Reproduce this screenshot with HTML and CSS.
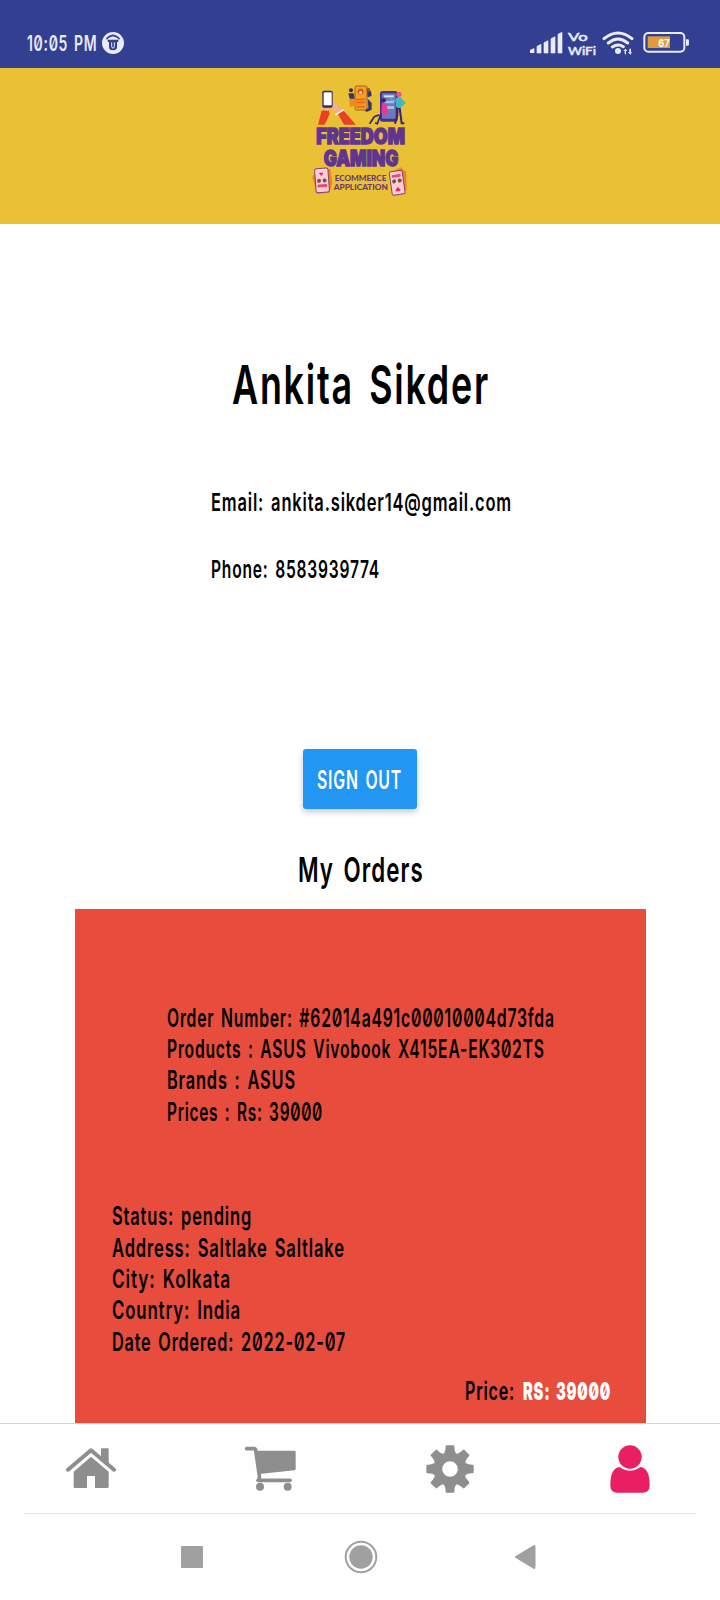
FILE: index.html
```html
<!DOCTYPE html>
<html lang="en">
<head>
<meta charset="utf-8">
<title>Freedom Gaming</title>
<link rel="stylesheet" href="styles.css">
</head>
<body>
<div class="screen">
  <div class="status-bar">
    <span class="clock"><span class="t t-clock">10:05 PM</span></span>
    <svg class="badge" width="22" height="22" viewBox="0 0 66 66"><circle cx="33" cy="33" r="33" fill="#e9ebfa"/><path d="M14 22Q16 14 33 10Q50 14 52 22" fill="none" stroke="#333f91" stroke-width="5"/><path d="M17 23H49V30H45V45Q45 55 33 55T21 45V30H17z" fill="#333f91"/><path d="M29 31V44Q29 48 33 48T37 44V31" fill="none" stroke="#e9ebfa" stroke-width="3"/></svg>
    <svg class="indicators" width="162" height="30" viewBox="0 0 486 90">
      <g fill="#e9ebfa"><path d="M3 66l13-6v15H3z"/><path d="M24 55l12-6v26H24zM45 44l12-6v37H45zM66 32l12-6v49H66zM87 19l12-6v62H87z" stroke="#e9ebfa" stroke-width="2" stroke-linejoin="round"/>
      <text x="117" y="38" class="vo" textLength="59" lengthAdjust="spacingAndGlyphs">Vo</text>
      <text x="117" y="80" class="vo" textLength="84" lengthAdjust="spacingAndGlyphs">WiFi</text>
      <circle cx="267" cy="69" r="9"/><path d="M289 62l6 7h-4v10h-4V69h-4zM301 62v11h-4l7 7 5-7h-3V62z"/></g>
      <path d="M225 32Q267-2 309 32M238 45Q267 21 296 45M250 57Q267 45 283 56" fill="none" stroke="#e9ebfa" stroke-width="9" stroke-linecap="round"/>
      <rect x="346" y="15" width="120" height="56" rx="12" fill="none" stroke="#e9ebfa" stroke-width="6"/>
      <rect x="356" y="25" width="67" height="35" fill="#e09a38"/><path d="M471 34h5q4 0 4 4v11q0 4-4 4h-5z" fill="#e9ebfa"/>
      <text x="388" y="58" class="pct" textLength="34" lengthAdjust="spacingAndGlyphs">67</text>
    </svg>
  </div>

  <header class="brand">
    <svg width="120" height="140" viewBox="0 0 360 420">
      <path d="M65 122L85 119 89 132 74 164H54z" fill="#e84125"/><path d="M111 127L129 120 168 164H132z" fill="#e84125"/>
      <path d="M64 118L67 93 90 88 101 96 127 118 112 132 90 111 84 124z" fill="#f3b08a"/>
      <path d="M106 135L132 119" stroke="#fff" stroke-width="4"/>
      <rect x="67" y="62" width="31" height="51" rx="5" fill="#33295f"/><rect x="71" y="67" width="24" height="39" fill="#fff"/>
      <rect x="165" y="48" width="36" height="72" rx="4" fill="#f4a41c" stroke="#a5612b" stroke-width="3"/>
      <circle cx="182" cy="65" r="9" fill="#d4532a"/><circle cx="182" cy="68" r="5" fill="#f7d3a8"/>
      <path d="M148 88l11-7 7 11 31-10v20l-48 9z" fill="#f28b18"/><path d="M168 88h25M168 97h25M170 111h25" stroke="#e5631f" stroke-width="4"/>
      <circle cx="153" cy="61" r="6" fill="#34265f"/><path d="M145 70h16l3 16h-15zM201 61l12 2 2 15-12 4zM203 86l12 13v20l-13 6-9-2 12-10z" fill="#34366e"/><circle cx="205" cy="60" r="6" fill="#a3511f"/>
      <rect x="240" y="63" width="53" height="92" rx="8" fill="#463091"/><rect x="246" y="70" width="41" height="76" rx="3" fill="#6c79bd"/>
      <rect x="252" y="76" width="29" height="6" fill="#d5e3f4"/><path d="M251 92h31v8h-31zM262 108h20v9h-20z" fill="#a8bce1"/>
      <circle cx="251" cy="91" r="7" fill="#392477"/><path d="M246 98l12 2 5 21-6 18-13-12z" fill="#ed3598"/><path d="M242 134l-10 27-7-2M238 134l-15 6-14 21" fill="none" stroke="#392477" stroke-width="5"/>
      <circle cx="297" cy="73" r="8" fill="#e95c7e"/><path d="M288 84l13-3 9 13-7 20-15-3z" fill="#41b6c6"/><path d="M306 90l8 8-8 9M289 93l-19-6" fill="none" stroke="#41b6c6" stroke-width="5"/>
      <path d="M293 113l-1 24-7 24M299 114l6 46h8" fill="none" stroke="#392477" stroke-width="6"/>
      <g class="wordmark"><text x="49" y="221" textLength="266" lengthAdjust="spacingAndGlyphs">FREEDOM</text><text x="71" y="289" textLength="224" lengthAdjust="spacingAndGlyphs">GAMING</text></g>
      <g class="tagline"><text x="104" y="333" textLength="155" lengthAdjust="spacingAndGlyphs">ECOMMERCE</text><text x="101" y="361" textLength="163" lengthAdjust="spacingAndGlyphs">APPLICATION</text></g>
      <path d="M37 320l12-16 42-8 6 42-9 30-36 4-8-26z" fill="#f08022"/>
      <g transform="rotate(-4 66 331)"><rect x="46" y="295" width="40" height="72" rx="5" fill="#f8cfd3" stroke="#81456e" stroke-width="3"/><path d="M65 318l-6-7q1-6 6-2 5-4 6 2z" fill="#e82c68"/><circle cx="57" cy="332" r="6" fill="#775240"/><circle cx="74" cy="332" r="6" fill="#775240"/><rect x="51" y="343" width="30" height="9" rx="4" fill="#ee477a"/></g>
      <path d="M270 308l33-16 16 15 1 52-14 16-24-5z" fill="#f08022"/>
      <g transform="rotate(-8 291 338)"><rect x="272" y="303" width="39" height="71" rx="5" fill="#f8cfd3" stroke="#81456e" stroke-width="3"/><rect x="278" y="313" width="27" height="9" rx="3" fill="#ee477a"/><circle cx="283" cy="333" r="6" fill="#775240"/><circle cx="300" cy="333" r="6" fill="#775240"/><path d="M291 351l8 9q-2 7-8 3-6 4-8-3z" fill="#e82c68"/></g>
    </svg>
  </header>

  <main class="content">
    <h1 class="name"><span class="t t-name">Ankita Sikder</span></h1>
    <div class="contact">
      <p><span class="t t-email">Email: ankita.sikder14@gmail.com</span></p>
      <p><span class="t t-phone">Phone: 8583939774</span></p>
    </div>
    <button class="sign-out"><span class="t t-button">SIGN OUT</span></button>
    <h2 class="orders-title"><span class="t t-title">My Orders</span></h2>
    <section class="order">
      <div class="items">
        <p><span class="t t-number">Order Number: #62014a491c00010004d73fda</span></p>
        <p><span class="t t-products">Products : ASUS Vivobook X415EA-EK302TS</span></p>
        <p><span class="t t-brands">Brands : ASUS</span></p>
        <p><span class="t t-prices">Prices : Rs: 39000</span></p>
      </div>
      <div class="shipping">
        <p><span class="t t-status">Status: pending</span></p>
        <p><span class="t t-address">Address: Saltlake Saltlake</span></p>
        <p><span class="t t-city">City: Kolkata</span></p>
        <p><span class="t t-country">Country: India</span></p>
        <p><span class="t t-date">Date Ordered: 2022-02-07</span></p>
      </div>
      <p class="total"><span class="total-label"><span class="t t-price">Price:</span></span><strong class="total-value"><span class="t t-amount">RS: 39000</span></strong></p>
    </section>
  </main>

  <nav class="tabs">
    <a class="tab tab-home"><svg width="50" height="41" viewBox="0 0 150 123"><path d="M6 65L75 7l69 58" fill="none" stroke="#8e8e8e" stroke-width="12" stroke-linecap="round" stroke-linejoin="round"/><path d="M105 3q0-2 2-2h19q2 0 2 2v47l-23-19z" fill="#8e8e8e"/><path d="M75 26l53 45v45q0 4-4 4H87V84H63v36H27q-4 0-4-4V71z" fill="#8e8e8e"/></svg></a>
    <a class="tab"><svg width="52" height="45" viewBox="0 0 156 135"><path d="M8 8h22q4 0 5 4l11 77v10" fill="none" stroke="#8e8e8e" stroke-width="11" stroke-linecap="round"/><path d="M36 14h115q4 0 4 4v51q0 4-4 4L46 84z" fill="#8e8e8e"/><path d="M42 103h96" stroke="#8e8e8e" stroke-width="11" stroke-linecap="round"/><circle cx="48" cy="122" r="12" fill="#8e8e8e"/><circle cx="131" cy="122" r="12" fill="#8e8e8e"/></svg></a>
    <a class="tab"><svg width="48" height="48" viewBox="-72 -72 144 144"><defs><path id="tooth" d="M-18-48Q-14-50-13-68Q-13-71-10-71H10Q13-71 13-68Q14-50 18-48z"/></defs><g fill="#8e8e8e"><use href="#tooth"/><use href="#tooth" transform="rotate(45)"/><use href="#tooth" transform="rotate(90)"/><use href="#tooth" transform="rotate(135)"/><use href="#tooth" transform="rotate(180)"/><use href="#tooth" transform="rotate(225)"/><use href="#tooth" transform="rotate(270)"/><use href="#tooth" transform="rotate(315)"/></g><circle r="37" fill="none" stroke="#8e8e8e" stroke-width="27"/></svg></a>
    <a class="tab"><svg width="40" height="48" viewBox="0 0 120 144"><g fill="#e91e63"><circle cx="60" cy="36" r="35"/><path d="M29 66Q60 89 91 66Q119 68 119 122Q118 143 98 143H22Q2 143 1 122Q1 68 29 66z"/></g></svg></a>
  </nav>
  <div class="system-nav">
    <svg width="22" height="22" viewBox="0 0 22 22"><rect width="22" height="22" rx="1" fill="#a0a0a0"/></svg>
    <svg width="34" height="34" viewBox="0 0 34 34"><circle cx="17" cy="17" r="15.3" fill="none" stroke="#a0a0a0" stroke-width="2"/><circle cx="17" cy="17" r="11.7" fill="#a0a0a0"/></svg>
    <svg width="22" height="26" viewBox="0 0 22 26"><path d="M1 13L20 1.5q1-.5 1 1v21q0 1.5-1 1z" fill="#a0a0a0" stroke="#a0a0a0" stroke-linejoin="round"/></svg>
  </div>
</div>
</body>
</html>
```
FILE: styles.css
```css
* { box-sizing: border-box; }
body { margin: 0; background: #fff; color: #000; font-family: Inter, "Noto Sans", sans-serif; font-feature-settings: "zero"; }
h1, h2, p { margin: 0; font-weight: 600; }
.screen { width: 720px; height: 1600px; display: flex; flex-direction: column; overflow: hidden; }

/* Condensed lettering */
.t { display: inline-block; white-space: nowrap; transform-origin: 0 50%; letter-spacing: .05em; word-spacing: .12em; }
.t-clock { transform: scaleX(.665); }
.t-name { transform: scaleX(.664); }
.t-email { transform: scaleX(.673); }
.t-phone { transform: scaleX(.637); }
.t-button { transform: scaleX(.633); }
.t-title { transform: scaleX(.656); }
.t-number { transform: scaleX(.63); }
.t-products { transform: scaleX(.627); }
.t-brands { transform: scaleX(.655); }
.t-prices { transform: scaleX(.615); }
.t-status { transform: scaleX(.66); }
.t-address { transform: scaleX(.663); }
.t-city { transform: scaleX(.689); }
.t-country { transform: scaleX(.673); }
.t-date { transform: scaleX(.65); }
.t-price { transform: scaleX(.644); }
.t-amount { transform: scaleX(.591); }

.status-bar { height: 68px; flex: none; display: flex; align-items: flex-start; background: #333f91; color: #e9ebfa; padding: 32px 29px 0 27px; }
.clock { width: 75px; height: 22px; line-height: 24px; font-size: 21px; font-weight: 600; }
.indicators { margin: -4px 0 0 auto; }
.vo { font: 500 36px Lato, sans-serif; stroke: #e9ebfa; stroke-width: 1.5; }
.pct { font: 700 33px Inter, sans-serif; fill: #fff; }

.brand { height: 155.5px; flex: none; background: #eac034; display: flex; justify-content: center; padding-top: 2px; }
.wordmark { font: 900 63px Inter, sans-serif; fill: #5f3590; stroke: #5f3590; stroke-width: 4; }
.tagline { font: 900 23px Lato, sans-serif; fill: #6b3b69; }

.content { flex: none; height: 1199.5px; overflow: hidden; display: flex; flex-direction: column; align-items: center; padding-top: 131px; }
.name { width: 256px; height: 60px; line-height: 60px; font-size: 54px; }
.contact { width: 300px; margin: 71px 0 0 2px; line-height: 32px; font-size: 24.5px; display: flex; flex-direction: column; gap: 35px; }
.sign-out { width: 114px; height: 60px; margin-top: 164px; padding: 1px 0 0 14px; border: 0; border-radius: 3px; background: #2196f3; color: #fff; font: 600 25px/60px Inter, sans-serif; text-align: left; box-shadow: 0 3px 6px rgba(0,0,0,.22); }
.orders-title { width: 125px; height: 44px; margin-top: 39px; line-height: 44px; font-size: 34px; }
.order { width: 571px; flex: 1; margin: 17px 0 0 1px; padding: 94px 36px 0 37px; background: #e74c3c; font-size: 25px; line-height: 31.4px; display: flex; flex-direction: column; }
.items { padding-left: 55px; }
.shipping { margin-top: 73px; }
.total { display: flex; justify-content: flex-end; gap: 9px; margin-top: 18px; }
.total-label { width: 49px; }
.total-value { width: 87px; font-weight: 900; color: #fff; }

.tabs { height: 90px; flex: none; border-top: 1px solid #d4d4d4; display: grid; grid-template-columns: repeat(4, 1fr); justify-items: center; align-items: center; background: #fefefe; }
.tab { display: flex; }
.tab-home { padding-left: 1px; }
.system-nav { height: 87px; flex: none; margin: 0 24px; border-top: 1px solid #e6e6e6; display: flex; align-items: center; padding-left: 157px; }
.system-nav svg:nth-child(2) { margin-left: 141px; }
.system-nav svg:nth-child(3) { margin-left: 136px; }
```
